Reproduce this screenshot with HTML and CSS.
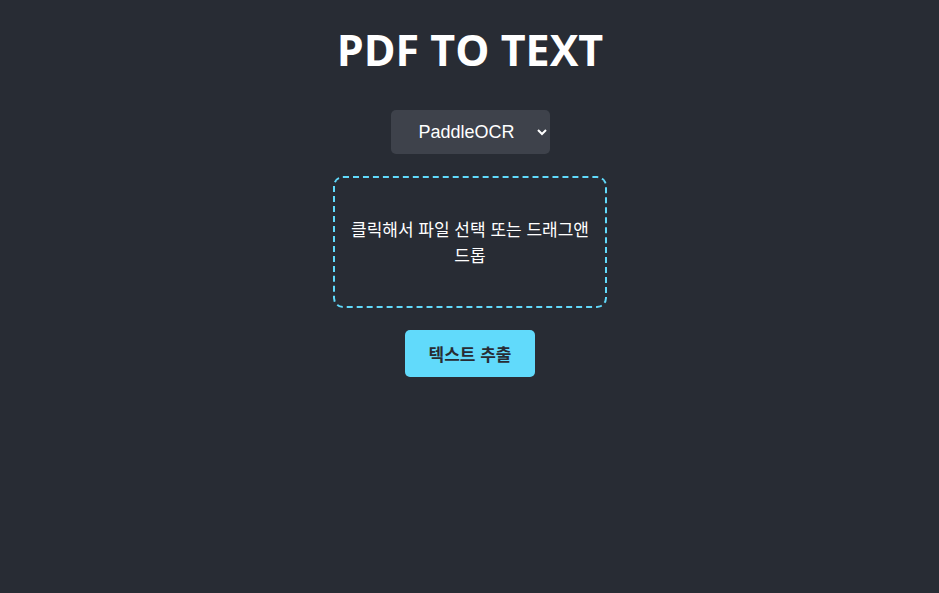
FILE: index.html
```html
<!DOCTYPE html>
<html lang="ko">
<head>
<meta charset="utf-8">
<title>PDF TO TEXT</title>
<link rel="stylesheet" href="styles.css">
</head>
<body>
<main class="app">
  <h1 class="title">PDF TO TEXT</h1>
  <select class="engine">
    <option>PaddleOCR</option>
    <option>Tesseract</option>
  </select>
  <label class="dropzone">
    <input type="file" class="file-input" accept="application/pdf">
    <span class="dropzone-text">클릭해서 파일 선택 또는 드래그앤 드롭</span>
  </label>
  <button class="extract">텍스트 추출</button>
</main>
</body>
</html>
```

FILE: styles.css
```css
html, body {
  margin: 0;
  padding: 0;
  height: 100%;
  background: #282c34;
}

body {
  font-family: "Noto Sans", "Noto Sans CJK KR", sans-serif;
  color: #ffffff;
}

.app {
  display: flex;
  flex-direction: column;
  align-items: center;
  padding-top: 22px;
  padding-left: 1px;
}

.title {
  margin: 0;
  font-family: "Open Sans", "Noto Sans", sans-serif;
  font-weight: 700;
  font-size: 43px;
  line-height: 56px;
  color: #ffffff;
}

.engine {
  margin-top: 32px;
  width: 159px;
  height: 44px;
  padding: 0 14px 0 24px;
  background: #3e424b;
  color: #ffffff;
  border: none;
  border-radius: 5px;
  font-family: "Liberation Sans", Arial, sans-serif;
  font-size: 18px;
  outline: none;
}

.dropzone {
  margin-top: 22px;
  width: 250px;
  padding: 38px 10px;
  border: 2px dashed #61dafb;
  border-radius: 10px;
  text-align: center;
  cursor: pointer;
  display: block;
  word-break: keep-all;
}

.file-input {
  display: none;
}

.dropzone-text {
  font-family: "Noto Sans CJK KR", sans-serif;
  font-size: 17px;
  line-height: 26px;
  color: #ffffff;
}

.extract {
  margin-top: 22px;
  width: 130px;
  height: 47px;
  background: #61dafb;
  color: #282c34;
  border: none;
  border-radius: 5px;
  font-family: "Noto Sans CJK KR", sans-serif;
  font-weight: 700;
  font-size: 17px;
  cursor: pointer;
}
```
